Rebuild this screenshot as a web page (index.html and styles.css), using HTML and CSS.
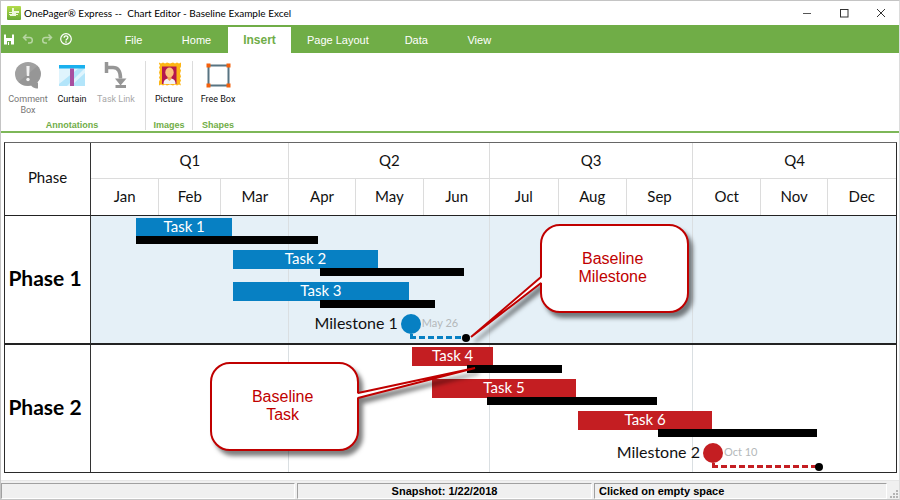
FILE: index.html
```html
<!DOCTYPE html>
<html lang="en">
<head>
<meta charset="utf-8">
<title>OnePager Express</title>
<link rel="stylesheet" href="styles.css">
</head>
<body>
<div class="window">
  <header class="titlebar">
    <svg class="app-logo" width="14" height="14" viewBox="0 0 14 14" aria-hidden="true">
      <defs><linearGradient id="logo" x1="0" y1="0" x2="0" y2="1"><stop offset="0" stop-color="#b4dc4a"/><stop offset="1" stop-color="#6aaa35"/></linearGradient></defs>
      <rect width="14" height="14" rx="1" fill="url(#logo)"/>
      <path d="M5 2h2v3h5v2H9v1h2v1H9v1H3V9H2V8h3V7H2V6h3z" fill="#eef8dc"/>
    </svg>
    <h1 class="title">OnePager® Express --&nbsp; Chart Editor - Baseline Example Excel</h1>
    <div class="window-buttons">
      <button class="window-button" aria-label="Minimize"><svg width="10" height="10" viewBox="0 0 10 10"><path d="M1 5.500h8" stroke="#555" fill="none"/></svg></button>
      <button class="window-button" aria-label="Maximize"><svg width="10" height="10" viewBox="0 0 10 10"><rect x="1.500" y="1.500" width="7.500" height="7.500" stroke="#333" fill="none"/></svg></button>
      <button class="window-button" aria-label="Close"><svg width="10" height="10" viewBox="0 0 10 10"><path d="M1 1l8 8M9 1l-8 8" stroke="#333" fill="none"/></svg></button>
    </div>
  </header>

  <nav class="tabbar">
    <div class="quick">
      <button class="quick-button" aria-label="Save"><svg width="12" height="12" viewBox="0 0 12 12"><path d="M1 1.500h10v10H1z" fill="#fff"/><path d="M3 1h6v4H3zM4 8h4v4H4z" fill="#70ad47"/><path d="M5 9h1v3H5z" fill="#fff"/></svg></button>
      <button class="quick-button" aria-label="Undo"><svg width="12" height="12" viewBox="0 0 12 12"><path d="M4.500 1.500L1.500 4.500l3 3M2 4.500h5.500a2.800 2.800 0 0 1 0 5.600H6" stroke="#b7d6a3" stroke-width="1.500" fill="none"/></svg></button>
      <button class="quick-button" aria-label="Redo"><svg width="12" height="12" viewBox="0 0 12 12"><path d="M7.500 1.500l3 3-3 3M10 4.500H4.500a2.800 2.800 0 0 0 0 5.600H6" stroke="#b7d6a3" stroke-width="1.500" fill="none"/></svg></button>
      <button class="quick-button" aria-label="Help"><svg width="12" height="12" viewBox="0 0 12 12"><circle cx="6" cy="6" r="5.300" stroke="#fff" stroke-width="1.200" fill="none"/><path d="M4.100 4.800c0-2.600 3.800-2.500 3.800-.3 0 1.400-1.900 1.400-1.900 2.900M6 8.300v1.400" stroke="#fff" stroke-width="1.300" fill="none"/></svg></button>
    </div>
    <button class="tab">File</button>
    <button class="tab">Home</button>
    <button class="tab tab-active">Insert</button>
    <button class="tab">Page Layout</button>
    <button class="tab">Data</button>
    <button class="tab">View</button>
  </nav>

  <section class="ribbon">
    <div class="group">
      <div class="tools">
        <button class="tool tool-off" disabled>
          <svg width="28" height="28" viewBox="0 0 28 28"><ellipse cx="14" cy="13" rx="13" ry="12" fill="#a0a0a0"/><path d="M14 22h10v5.500c-4 0-7-2-8-5z" fill="#a0a0a0"/><path d="M4.500 21L23.500 5A12.500 12 0 0 1 24 20v7c-3 0-5-1-6.500-3C12 26 7 24 4.500 21z" fill="#8c8c8c" opacity=".5"/><path d="M12.400 5h3.200l-.4 10h-2.400z" fill="#f2f2f2"/><circle cx="14" cy="18.500" r="1.700" fill="#f2f2f2"/></svg>
          <span>Comment<br>Box</span>
        </button>
        <button class="tool">
          <svg width="28" height="28" viewBox="0 0 28 28"><path d="M1 7h26v18H1z" fill="#b3e5fa"/><path d="M1 7h20L1 23zM27 7v5L13 25H9z" fill="#dff4fd"/><path d="M1 4h26v3.500H1z" fill="#19b0ee"/><path d="M12 7.500h4V25h-4z" fill="#a850a0"/></svg>
          <span>Curtain</span>
        </button>
        <button class="tool tool-pale" disabled>
          <svg width="28" height="28" viewBox="0 0 28 28"><path d="M4.500 1v11M6 6.500h5c5 0 7.500 4 7.500 11" stroke="#969696" stroke-width="3.500" fill="none"/><path d="M13 17.500h11.500l-6 7z" fill="#969696"/><path d="M13.500 25.500h10.500" stroke="#969696" stroke-width="3"/></svg>
          <span>Task Link</span>
        </button>
      </div>
      <h2 class="group-name">Annotations</h2>
    </div>
    <div class="group">
      <div class="tools">
        <button class="tool">
          <svg width="28" height="28" viewBox="0 0 28 28"><path d="M4 1.500l2 1 2-1 2 1 2-1 3 1 3-1 2 1 2-1 2 1 2-1v4l-1 2 1 2-1 3 1 3-1 2 1 2-1 2 1 3-2-1-2 1-2-1-2 1-3-1-3 1-2-1-2 1-2-1-2 1v-4l1-2-1-2 1-2-1-3 1-3-1-2 1-2-1-2z" fill="#fdb515"/><path d="M7 5.500h14.500v17.500H7z" fill="#b5174d"/><path d="M8.500 23c0-4 2-5.500 6-5.500s6 1.500 6 5.500z" fill="#f3f3f3"/><path d="M12.500 14h4v4l-2 2-2-2z" fill="#f0a44e"/><ellipse cx="14.500" cy="11.500" rx="4.200" ry="5" fill="#fbc27c"/></svg>
          <span>Picture</span>
        </button>
      </div>
      <h2 class="group-name">Images</h2>
    </div>
    <div class="group">
      <div class="tools">
        <button class="tool">
          <svg width="28" height="28" viewBox="0 0 28 28"><path d="M4.500 4.500h20v20h-20z" fill="#fff" stroke="#587482" stroke-width="2"/><path d="M2.500 2.500h4v4h-4zM22.500 2.500h4v4h-4zM2.500 22.500h4v4h-4zM22.500 22.500h4v4h-4z" fill="#f4600c"/></svg>
          <span>Free Box</span>
        </button>
      </div>
      <h2 class="group-name">Shapes</h2>
    </div>
  </section>

  <main class="chart">
    <div class="corner">Phase</div>
    <div class="scale">
      <div class="quarters"><span>Q1</span><span>Q2</span><span>Q3</span><span>Q4</span></div>
      <div class="months"><span>Jan</span><span>Feb</span><span>Mar</span><span>Apr</span><span>May</span><span>Jun</span><span>Jul</span><span>Aug</span><span>Sep</span><span>Oct</span><span>Nov</span><span>Dec</span></div>
    </div>

    <div class="phase">Phase 1</div>
    <div class="track track-blue">
      <div class="gridlines"><i></i><i></i><i></i><i></i></div>
      <div class="lane"><div class="bar" style="grid-column:42/129">Task 1</div><div class="baseline" style="grid-column:42/207"></div></div>
      <div class="lane"><div class="bar" style="grid-column:130/261">Task 2</div><div class="baseline" style="grid-column:209/339"></div></div>
      <div class="lane"><div class="bar" style="grid-column:130/289">Task 3</div><div class="baseline" style="grid-column:209/313"></div></div>
      <div class="lane lane-milestone">
        <div class="milestone-name" style="grid-column:1/291">Milestone 1</div>
        <div class="milestone" style="grid-column-start:291"></div>
        <div class="milestone-date" style="grid-column-start:291">May 26</div>
        <div class="link" style="grid-column:291/341"></div>
      </div>
      <div class="callout callout-milestone">
        <svg class="callout-shape" width="149" height="89" viewBox="0 0 149 89" aria-hidden="true"><path d="M20 1H129a19 19 0 0 1 19 19V69a19 19 0 0 1-19 19H20A19 19 0 0 1 1 69V59L-69 113 1 53V20A19 19 0 0 1 20 1z"/></svg>
        <p class="callout-text">Baseline<br>Milestone</p>
      </div>
    </div>

    <div class="phase">Phase 2</div>
    <div class="track track-red">
      <div class="gridlines"><i></i><i></i><i></i><i></i></div>
      <div class="lane"><div class="bar" style="grid-column:292/366">Task 4</div><div class="baseline" style="grid-column:342/428"></div></div>
      <div class="lane"><div class="bar" style="grid-column:310/441">Task 5</div><div class="baseline" style="grid-column:360/514"></div></div>
      <div class="lane"><div class="bar" style="grid-column:443/564">Task 6</div><div class="baseline" style="grid-column:515/659"></div></div>
      <div class="lane lane-milestone">
        <div class="milestone-name" style="grid-column:1/565">Milestone 2</div>
        <div class="milestone" style="grid-column-start:565"></div>
        <div class="milestone-date" style="grid-column-start:565">Oct 10</div>
        <div class="link" style="grid-column:565/661"></div>
      </div>
      <div class="callout callout-task">
        <svg class="callout-shape" width="149" height="89" viewBox="0 0 149 89" aria-hidden="true"><path d="M20 1H129a19 19 0 0 1 19 19V31L265 6 148 36V69a19 19 0 0 1-19 19H20A19 19 0 0 1 1 69V20A19 19 0 0 1 20 1z"/></svg>
        <p class="callout-text">Baseline<br>Task</p>
      </div>
    </div>
  </main>

  <footer class="status">
    <div class="panel"></div>
    <div class="panel panel-center">Snapshot: 1/22/2018</div>
    <div class="panel">Clicked on empty space</div>
    <svg class="grip" width="10" height="10" viewBox="0 0 10 10" aria-hidden="true"><path d="M7 1h2v2H7zM4 4h2v2H4zM7 4h2v2H7zM1 7h2v2H1zM4 7h2v2H4zM7 7h2v2H7z" fill="#b4b4b4"/></svg>
  </footer>
</div>
</body>
</html>
```
FILE: styles.css
```css
* {
  box-sizing: border-box;
}

body,
h1,
h2,
p {
  margin: 0;
}

body {
  background: #fff;
  color: #111;
  font-family: "Liberation Sans", Arial, sans-serif;
  font-size: 11px;
}

button {
  margin: 0;
  padding: 0;
  border: 0;
  background: none;
  color: inherit;
  font: inherit;
}

svg {
  display: block;
  flex: none;
}

.window {
  display: flex;
  flex-direction: column;
  min-height: 100vh;
  border: 1px solid #c4c4c4;
  border-right-color: #dcdcdc;
}

/* Title bar */
.titlebar {
  display: flex;
  align-items: center;
  height: 24px;
  padding-left: 6px;
}

.title {
  margin-left: 3px;
  color: #000;
  font-family: Lato, Carlito, sans-serif;
  font-size: 10px;
  font-weight: 400;
  white-space: nowrap;
}

.window-buttons {
  display: flex;
  margin-left: auto;
}

.window-button {
  display: grid;
  place-items: center;
  width: 37px;
  height: 22px;
}

/* Tab bar */
.tabbar {
  display: flex;
  height: 28px;
  background: #70ad47;
  color: #fff;
}

.quick {
  display: flex;
  align-items: center;
  gap: 7px;
  width: 101px;
  padding-left: 2px;
}

.tab {
  min-width: 63px;
  padding: 1px 16px 0;
}

.tab-active {
  margin-top: 2px;
  padding: 0 15px 1px;
  background: #fff;
  color: #70ad47;
  font-size: 12px;
  font-weight: 700;
}

/* Ribbon */
.ribbon {
  display: flex;
  height: 80px;
  padding-top: 8px;
  border-bottom: 2px solid #7db758;
}

.group {
  display: flex;
  flex-direction: column;
  justify-content: space-between;
  height: 69px;
  padding: 0 1px;
  border-left: 1px solid #dcdcdc;
}

.group:first-child {
  padding: 0 7px 0 5px;
  border-left: 0;
}

.tools {
  display: flex;
}

.tool {
  display: flex;
  flex-direction: column;
  align-items: center;
  gap: 5px;
  width: 44px;
  font-family: Roboto, sans-serif;
  font-size: 9px;
  line-height: 11px;
  white-space: nowrap;
}

.group:last-child .tool {
  width: 48px;
}

.tool-off {
  color: #777;
}

.tool-pale {
  color: #a8a8a8;
}

.group-name {
  color: #70ad47;
  font-size: 9px;
  line-height: 10px;
  text-align: center;
}

/* Chart */
.chart {
  display: grid;
  grid-template-columns: 86px minmax(0, 1fr);
  margin: 9px 2px 7px 3px;
  border: 1px solid #2a2a2a;
  border-top-color: #666;
  font-family: Lato, Carlito, sans-serif;
  font-size: 15px;
}

.corner,
.phase {
  display: grid;
  place-items: center;
  padding-bottom: 4px;
  border-right: 1px solid #333;
}

.corner,
.scale {
  height: 73px;
  border-bottom: 1px solid #222;
}

.phase {
  padding-right: 5px;
  color: #000;
  font-size: 21px;
  font-weight: 700;
  white-space: nowrap;
}

.quarters,
.months,
.gridlines {
  display: grid;
}

.quarters,
.gridlines {
  grid-template-columns: 90fr 91fr 92fr 92fr;
}

.months {
  grid-template-columns: 31fr 28fr 31fr 30fr 31fr 30fr 31fr 31fr 30fr 31fr 30fr 31fr;
}

.quarters span,
.months span {
  display: grid;
  place-items: center;
  height: 36px;
  padding-bottom: 2px;
  border-right: 1px solid #dcdcdc;
}

.quarters span {
  border-bottom: 1px solid #dcdcdc;
}

.quarters :last-child,
.months :last-child,
.gridlines :last-child {
  border-right: 0;
}

.track {
  position: relative;
}

.track-blue {
  --tone: #0780c3;
  background: #e5f0f7;
}

.track-red {
  --tone: #c41e22;
}

.phase:nth-of-type(3),
.track-blue {
  border-bottom: 2px solid #222;
}

.gridlines {
  position: absolute;
  inset: 0;
}

.gridlines i {
  border-right: 1px solid #dadfe2;
}

/* Every lane is divided into half-day columns */
.lane {
  position: relative;
  display: grid;
  grid-template-columns: repeat(730, minmax(0, 1fr));
  grid-template-rows: 18px 8px;
  height: 32px;
  padding-top: 2px;
}

.bar {
  grid-row: 1;
  height: 19px;
  background: var(--tone);
  color: #fff;
  line-height: 17px;
  text-align: center;
  white-space: nowrap;
}

.baseline {
  z-index: 1;
  grid-row: 2;
  background: #000;
}

.lane-milestone {
  grid-template-rows: 22px 5px;
  height: 31px;
  padding-top: 0;
}

.milestone-name,
.milestone-date {
  grid-row: 1;
  line-height: 22px;
  white-space: nowrap;
}

.milestone-name {
  justify-self: end;
  margin-right: 13px;
  font-size: 16px;
}

.milestone-date {
  margin-left: 11px;
  color: #b4b8ba;
  font-size: 11px;
}

.milestone {
  grid-row: 1;
  align-self: end;
  width: 20px;
  height: 20px;
  margin-left: -10px;
  border-radius: 50%;
  background: var(--tone);
}

.link {
  position: relative;
  grid-row: 2;
  margin-left: -1px;
  border-left: 3px solid var(--tone);
  background: repeating-linear-gradient(90deg, var(--tone) 0 3px, transparent 3px 6px, var(--tone) 6px 9px) bottom / 100% 3px no-repeat;
}

.link::after {
  content: "";
  position: absolute;
  right: -4px;
  bottom: -3px;
  width: 8px;
  height: 8px;
  border-radius: 50%;
  background: #000;
}

/* Callouts */
.callout {
  position: absolute;
  z-index: 2;
  display: grid;
  width: 149px;
  height: 89px;
}

.callout-milestone {
  top: 8px;
  left: 55.8%;
}

.callout-task {
  top: 17px;
  left: 14.8%;
}

.callout-shape {
  grid-area: 1 / 1;
  overflow: visible;
  fill: #fff;
  stroke: #c00000;
  stroke-width: 2;
  stroke-linejoin: bevel;
  filter: drop-shadow(4px 5px 2px rgba(0, 0, 0, 0.5));
}

.callout-text {
  z-index: 1;
  grid-area: 1 / 1;
  place-self: center;
  padding: 0 4px 2px 0;
  color: #c00000;
  font-family: "Liberation Sans", Arial, sans-serif;
  font-size: 16px;
  line-height: 18px;
  text-align: center;
}

/* Status bar */
.status {
  display: grid;
  grid-template-columns: 294fr 295fr 293fr 10px;
  gap: 2px;
  margin-top: auto;
  padding-top: 2px;
  border-top: 1px solid #e6e6e6;
  background: #f0f0f0;
  color: #000;
  font-weight: 700;
}

.panel {
  height: 16px;
  padding: 0 4px;
  border: 1px solid;
  border-color: #a0a0a0 #fff #fff #a0a0a0;
  line-height: 15px;
}

.panel-center {
  text-align: center;
}

.grip {
  align-self: end;
}
```
